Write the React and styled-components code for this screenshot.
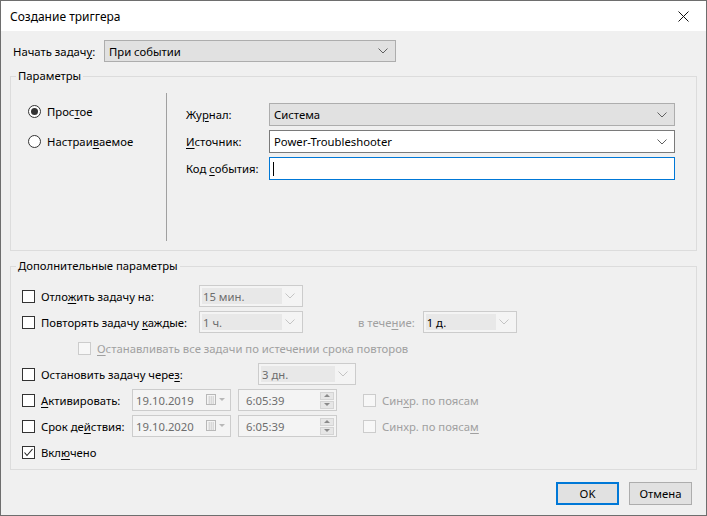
import styled, { createGlobalStyle } from 'styled-components';

const GlobalStyle = createGlobalStyle`
  html, body {
    margin: 0;
    padding: 0;
    background: #ffffff;
  }
  * {
    box-sizing: border-box;
  }
`;

const Chevron = ({ color = '#606060' }) => (
  <svg width="10" height="6" viewBox="0 0 10 6">
    <polyline points="0.5,0.5 5,5 9.5,0.5" fill="none" stroke={color} strokeWidth="1" />
  </svg>
);

const CloseIcon = () => (
  <svg width="11" height="11" viewBox="0 0 11 11">
    <path d="M0.5 0.5 L10.5 10.5 M10.5 0.5 L0.5 10.5" stroke="#111" strokeWidth="1" />
  </svg>
);

const CalendarIcon = () => (
  <svg width="22" height="12" viewBox="0 0 22 12">
    <rect x="0.5" y="0.5" width="9" height="10" fill="#f4f4f4" stroke="#b8b8b8" />
    <path d="M2 3 H8 M2 5 H8 M2 7 H8 M2 9 H8 M3.5 2 V10 M5.5 2 V10 M7.5 2 V10" stroke="#d4d4d4" strokeWidth="0.8" />
    <polygon points="13,4 19,4 16,7" fill="#b8b8b8" />
  </svg>
);

const Check = () => (
  <svg width="11" height="11" viewBox="0 0 11 11">
    <polyline points="1.5,5.5 4,8.5 9.5,2" fill="none" stroke="#222" strokeWidth="1.1" />
  </svg>
);

const App = () => {
  return (
    <>
      <GlobalStyle />
      <Window>
        <TitleBar>
          <Title>Создание триггера</Title>
          <CloseButton>
            <CloseIcon />
          </CloseButton>
        </TitleBar>

        <Body>
          <TopRow>
            <TopLabel>
              Начать задач<U>у</U>:
            </TopLabel>
            <Select $w={292} $tone="gray">
              <SelectText>При событии</SelectText>
              <Arrow>
                <Chevron />
              </Arrow>
            </Select>
          </TopRow>

          <Group>
            <Legend>Параметры</Legend>
            <GroupBody>
              <RadioColumn>
                <RadioRow>
                  <Radio $checked />
                  <span>
                    Прос<U>т</U>ое
                  </span>
                </RadioRow>
                <RadioRow>
                  <Radio />
                  <span>
                    Настраи<U>в</U>аемое
                  </span>
                </RadioRow>
              </RadioColumn>
              <Separator />
              <FieldGrid>
                <FieldLabel>
                  Жу<U>р</U>нал:
                </FieldLabel>
                <Select $tone="gray" $h={23}>
                  <SelectText>Система</SelectText>
                  <Arrow>
                    <Chevron />
                  </Arrow>
                </Select>
                <FieldLabel>
                  <U>И</U>сточник:
                </FieldLabel>
                <Select $tone="white" $h={23}>
                  <SelectText>Power-Troubleshooter</SelectText>
                  <Arrow>
                    <Chevron />
                  </Arrow>
                </Select>
                <FieldLabel>
                  Код <U>с</U>обытия:
                </FieldLabel>
                <TextInput>
                  <Caret />
                </TextInput>
              </FieldGrid>
            </GroupBody>
          </Group>

          <Group $gap={7}>
            <Legend>Дополнительные параметры</Legend>
            <OptionsBody>
              <OptionRow>
                <Box />
                <OptionLabel $w={158}>
                  Отло<U>ж</U>ить задачу на:
                </OptionLabel>
                <DisabledCombo $w={104}>
                  <ComboText>15 мин.</ComboText>
                  <Arrow>
                    <Chevron color="#c4c4c4" />
                  </Arrow>
                </DisabledCombo>
              </OptionRow>

              <OptionRow>
                <Box />
                <OptionLabel $w={158}>
                  Повторять задачу <U>к</U>аждые:
                </OptionLabel>
                <DisabledCombo $w={104}>
                  <ComboText>1 ч.</ComboText>
                  <Arrow>
                    <Chevron color="#c4c4c4" />
                  </Arrow>
                </DisabledCombo>
                <GreyLabel $ml={55} $mr={8}>
                  в тече<U>н</U>ие:
                </GreyLabel>
                <DisabledCombo $w={94}>
                  <ComboText $dark>1 д.</ComboText>
                  <Arrow>
                    <Chevron color="#c4c4c4" />
                  </Arrow>
                </DisabledCombo>
              </OptionRow>

              <OptionRow $indent={56}>
                <Box $disabled />
                <GreyLabel>
                  <U>О</U>станавливать все задачи по истечении срока повторов
                </GreyLabel>
              </OptionRow>

              <OptionRow>
                <Box />
                <OptionLabel $w={217}>
                  Остановить задачу чере<U>з</U>:
                </OptionLabel>
                <DisabledCombo $w={98}>
                  <ComboText>3 дн.</ComboText>
                  <Arrow>
                    <Chevron color="#c4c4c4" />
                  </Arrow>
                </DisabledCombo>
              </OptionRow>

              <OptionRow>
                <Box />
                <OptionLabel $w={91}>
                  <U>А</U>ктивировать:
                </OptionLabel>
                <DateField>
                  <FieldValue>19.10.2019</FieldValue>
                  <CalendarIcon />
                </DateField>
                <TimeField>
                  <FieldValue $pl={7}>6:05:39</FieldValue>
                  <Spinner>
                    <SpinButton>
                      <Tri $up />
                    </SpinButton>
                    <SpinButton>
                      <Tri />
                    </SpinButton>
                  </Spinner>
                </TimeField>
                <Box $disabled $ml={26} />
                <GreyLabel>
                  Син<U>х</U>р. по поясам
                </GreyLabel>
              </OptionRow>

              <OptionRow>
                <Box />
                <OptionLabel $w={91}>
                  Срок де<U>й</U>ствия:
                </OptionLabel>
                <DateField>
                  <FieldValue>19.10.2020</FieldValue>
                  <CalendarIcon />
                </DateField>
                <TimeField>
                  <FieldValue $pl={7}>6:05:39</FieldValue>
                  <Spinner>
                    <SpinButton>
                      <Tri $up />
                    </SpinButton>
                    <SpinButton>
                      <Tri />
                    </SpinButton>
                  </Spinner>
                </TimeField>
                <Box $disabled $ml={26} />
                <GreyLabel>
                  Синхр. по пояса<U>м</U>
                </GreyLabel>
              </OptionRow>

              <OptionRow>
                <Box>
                  <Check />
                </Box>
                <OptionLabel>
                  Вкл<U>ю</U>чено
                </OptionLabel>
              </OptionRow>
            </OptionsBody>
          </Group>

          <Buttons>
            <Button $default>OK</Button>
            <Button>Отмена</Button>
          </Buttons>
        </Body>
      </Window>
    </>
  );
};

const Window = styled.div`
  width: 707px;
  height: 516px;
  border: 1px solid #6e6e6e;
  background: #f0f0f0;
  display: flex;
  flex-direction: column;
  font-family: "Noto Sans", "Open Sans", sans-serif;
  font-size: 11.3px;
  color: #000;
  overflow: hidden;
`;

const TitleBar = styled.div`
  height: 30px;
  background: #ffffff;
  display: flex;
  align-items: center;
  justify-content: space-between;
  padding-left: 9px;
`;

const Title = styled.div`
  font-size: 12px;
  color: #000;
`;

const CloseButton = styled.div`
  width: 46px;
  height: 30px;
  display: flex;
  align-items: center;
  justify-content: center;
`;

const Body = styled.div`
  flex: 1;
  padding: 9px 9px 0 9px;
  display: flex;
  flex-direction: column;
`;

const U = styled.span`
  text-decoration: underline;
  text-underline-offset: 2px;
`;

const TopRow = styled.div`
  display: flex;
  align-items: center;
  height: 22px;
  padding-left: 3px;
`;

const TopLabel = styled.div`
  width: 91px;
`;

const Select = styled.div`
  width: ${p => (p.$w ? `${p.$w}px` : '100%')};
  height: ${p => p.$h || 22}px;
  display: flex;
  align-items: center;
  border: 1px solid ${p => (p.$tone === 'white' ? '#7a7a7a' : '#adadad')};
  background: ${p => (p.$tone === 'white' ? '#ffffff' : '#e1e1e1')};
`;

const SelectText = styled.div`
  flex: 1;
  padding-left: 4px;
  white-space: nowrap;
`;

const Arrow = styled.div`
  width: 20px;
  display: flex;
  align-items: center;
  justify-content: center;
  padding-right: 4px;
`;

const Group = styled.fieldset`
  margin: ${p => p.$gap || 6}px 0 0 0;
  padding: 0;
  border: 1px solid #dcdcdc;
  min-width: 0;
`;

const Legend = styled.legend`
  margin-left: 5px;
  padding: 0 2px;
  line-height: 16px;
`;

const GroupBody = styled.div`
  display: flex;
  height: 166px;
`;

const RadioColumn = styled.div`
  width: 155px;
  padding: 17px 0 0 17px;
  display: flex;
  flex-direction: column;
  gap: 10px;
`;

const RadioRow = styled.div`
  display: flex;
  align-items: center;
  gap: 6px;
  height: 20px;
`;

const Radio = styled.span`
  width: 13px;
  height: 13px;
  border-radius: 50%;
  border: 1px solid #333333;
  background: #ffffff;
  display: flex;
  align-items: center;
  justify-content: center;

  &::after {
    content: '';
    display: ${p => (p.$checked ? 'block' : 'none')};
    width: 7px;
    height: 7px;
    border-radius: 50%;
    background: #333333;
  }
`;

const Separator = styled.div`
  width: 1px;
  margin: 9px 0;
  background: #a0a0a0;
`;

const FieldGrid = styled.div`
  flex: 1;
  display: grid;
  grid-template-columns: 83px 1fr;
  grid-auto-rows: 23px;
  row-gap: 4px;
  align-items: center;
  align-content: start;
  padding: 19px 21px 0 19px;
`;

const FieldLabel = styled.div`
  white-space: nowrap;
`;

const TextInput = styled.div`
  height: 23px;
  border: 1px solid #0078d7;
  background: #ffffff;
  display: flex;
  align-items: center;
  padding-left: 3px;
`;

const Caret = styled.span`
  width: 1px;
  height: 14px;
  background: #000;
`;

const OptionsBody = styled.div`
  padding: 9px 0 4px 11px;
  display: flex;
  flex-direction: column;
`;

const OptionRow = styled.div`
  height: 26px;
  display: flex;
  align-items: center;
  padding-left: ${p => p.$indent || 0}px;
`;

const Box = styled.span`
  width: 13px;
  height: 13px;
  flex: none;
  border: 1px solid ${p => (p.$disabled ? '#cccccc' : '#333333')};
  background: ${p => (p.$disabled ? '#f7f7f7' : '#ffffff')};
  margin-left: ${p => p.$ml || 0}px;
  margin-right: 6px;
  display: flex;
  align-items: center;
  justify-content: center;
`;

const OptionLabel = styled.span`
  width: ${p => (p.$w ? `${p.$w}px` : 'auto')};
  white-space: nowrap;
`;

const GreyLabel = styled.span`
  color: #a0a0a0;
  white-space: nowrap;
  margin-left: ${p => p.$ml || 0}px;
  margin-right: ${p => p.$mr || 0}px;
`;

const DisabledCombo = styled.div`
  width: ${p => p.$w}px;
  height: 22px;
  border: 1px solid #cccccc;
  background: #f4f4f4;
  display: flex;
  align-items: center;
  padding: 2px 0 2px 2px;
`;

const ComboText = styled.div`
  flex: 1;
  height: 100%;
  display: flex;
  align-items: center;
  padding-left: 1px;
  background: #e8e8e8;
  color: ${p => (p.$dark ? '#000' : '#6d6d6d')};
`;

const DateField = styled.div`
  width: 99px;
  height: 22px;
  border: 1px solid #cccccc;
  background: #f4f4f4;
  display: flex;
  align-items: center;
  justify-content: space-between;
  padding: 0 2px 0 3px;
  margin-right: 7px;
`;

const TimeField = styled.div`
  width: 99px;
  height: 22px;
  border: 1px solid #cccccc;
  background: #f4f4f4;
  display: flex;
  align-items: center;
  justify-content: space-between;
  padding-right: 2px;
`;

const FieldValue = styled.span`
  color: #6d6d6d;
  padding-left: ${p => p.$pl || 0}px;
`;

const Spinner = styled.div`
  display: flex;
  flex-direction: column;
  gap: 1px;
`;

const SpinButton = styled.div`
  width: 14px;
  height: 8px;
  background: #e6e6e6;
  border: 1px solid #d4d4d4;
  display: flex;
  align-items: center;
  justify-content: center;
`;

const Tri = styled.span`
  width: 0;
  height: 0;
  border-left: 3px solid transparent;
  border-right: 3px solid transparent;
  ${p => (p.$up ? 'border-bottom: 3px solid #8a8a8a;' : 'border-top: 3px solid #8a8a8a;')}
`;

const Buttons = styled.div`
  display: flex;
  justify-content: flex-end;
  gap: 10px;
  margin-top: 12px;
  padding-right: 5px;
`;

const Button = styled.div`
  width: 63px;
  height: 23px;
  display: flex;
  align-items: center;
  justify-content: center;
  background: #e1e1e1;
  border: ${p => (p.$default ? '2px solid #0078d7' : '1px solid #adadad')};
`;

export default App;
